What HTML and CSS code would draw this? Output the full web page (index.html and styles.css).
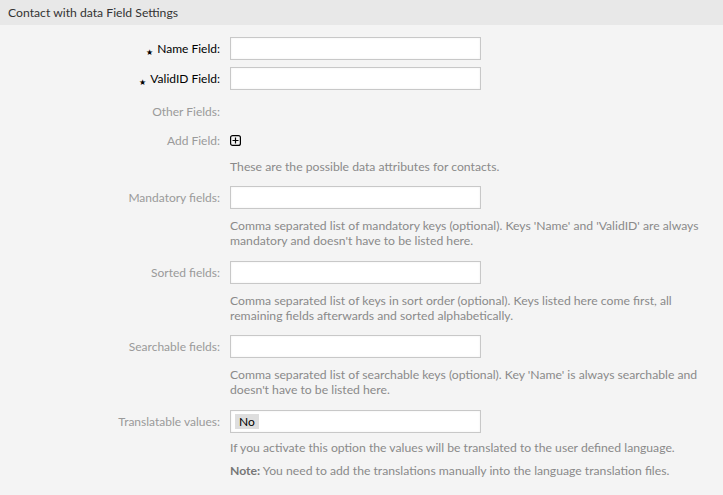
FILE: index.html
```html
<!DOCTYPE html>
<html>
<head>
<meta charset="utf-8">
<link rel="stylesheet" href="styles.css">
</head>
<body>
<div class="panel">
  <div class="panel-header">Contact with data Field Settings</div>
  <div class="panel-body">
    <div class="row row-first">
      <label class="label required"><span class="star">★</span>Name Field:</label>
      <div class="field"><div class="input"></div></div>
    </div>
    <div class="row row-tight">
      <label class="label required"><span class="star">★</span>ValidID Field:</label>
      <div class="field"><div class="input"></div></div>
    </div>
    <div class="row row-other">
      <label class="label">Other Fields:</label>
      <div class="field"></div>
    </div>
    <div class="row row-add">
      <label class="label">Add Field:</label>
      <div class="field">
        <div class="add-line">
          <svg class="add-icon" width="11" height="11" viewBox="0 0 11 11"><rect x="0.6" y="0.6" width="9.8" height="9.8" rx="2" ry="2" fill="none" stroke="#000" stroke-width="1.2"/><path d="M5.5 2.5v6M2.5 5.5h6" stroke="#000" stroke-width="1.2"/></svg>
        </div>
        <p class="desc desc-add">These are the possible data attributes for contacts.</p>
      </div>
    </div>
    <div class="row">
      <label class="label">Mandatory fields:</label>
      <div class="field">
        <div class="input"></div>
        <p class="desc">Comma separated list of mandatory keys (optional). Keys 'Name' and 'ValidID' are always mandatory and doesn't have to be listed here.</p>
      </div>
    </div>
    <div class="row">
      <label class="label">Sorted fields:</label>
      <div class="field">
        <div class="input"></div>
        <p class="desc">Comma separated list of keys in sort order (optional). Keys listed here come first, all remaining fields afterwards and sorted alphabetically.</p>
      </div>
    </div>
    <div class="row">
      <label class="label">Searchable fields:</label>
      <div class="field">
        <div class="input"></div>
        <p class="desc">Comma separated list of searchable keys (optional). Key 'Name' is always searchable and doesn't have to be listed here.</p>
      </div>
    </div>
    <div class="row">
      <label class="label">Translatable values:</label>
      <div class="field">
        <div class="input select"><span class="chip">No</span></div>
        <p class="desc desc-trans">If you activate this option the values will be translated to the user defined language.</p>
        <p class="desc desc-note"><strong>Note:</strong> You need to add the translations manually into the language translation files.</p>
      </div>
    </div>
  </div>
</div>
</body>
</html>
```

FILE: styles.css
```css
html, body {
  margin: 0;
  padding: 0;
  background: #f4f4f4;
}
body {
  font-family: "Lato", "Open Sans", sans-serif;
  font-size: 12px;
  color: #333;
  width: 723px;
  height: 495px;
  overflow: hidden;
}
.panel-header {
  height: 25px;
  line-height: 25px;
  background: #e8e8e8;
  padding-left: 8px;
  font-size: 12.2px;
  color: #333;
}
.panel-body {
  padding-top: 12px;
}
.row {
  display: flex;
  align-items: flex-start;
  margin-top: 12.5px;
}
.row-first { margin-top: 0; }
.row-tight { margin-top: 7px; }
.row-other { margin-top: 10px; }
.row-add { margin-top: 5.5px; }
.label {
  flex: none;
  width: 230px;
  padding-right: 10px;
  box-sizing: border-box;
  text-align: right;
  line-height: 23px;
  height: 23px;
  color: #9a9a9a;
}
.label.required {
  color: #000;
}
.star {
  font-size: 8px;
  margin-right: 4px;
  vertical-align: -2px;
}
.field {
  width: 483px;
  min-height: 23px;
}
.input {
  width: 251px;
  height: 23px;
  box-sizing: border-box;
  background: #fff;
  border: 1px solid #c8c8c8;
  box-shadow: inset 0 0 2px rgba(0,0,0,0.08);
}
.select {
  display: flex;
  align-items: center;
  padding-left: 4px;
}
.chip {
  background: #dedede;
  color: #000;
  height: 15px;
  line-height: 15px;
  padding: 0 4px;
  font-size: 12px;
}
.add-line {
  height: 23px;
  display: flex;
  align-items: center;
}
.add-icon { display: block; }
.desc {
  margin: 9px 0 0 0;
  line-height: 15px;
  font-size: 12.2px;
  color: #8a8a8a;
}
.desc-add { margin-top: 7px; }
.desc-trans { margin-top: 7.5px; }
.desc-note { margin-top: 7.5px; }
.desc strong { font-weight: bold; color: #777; }
```
